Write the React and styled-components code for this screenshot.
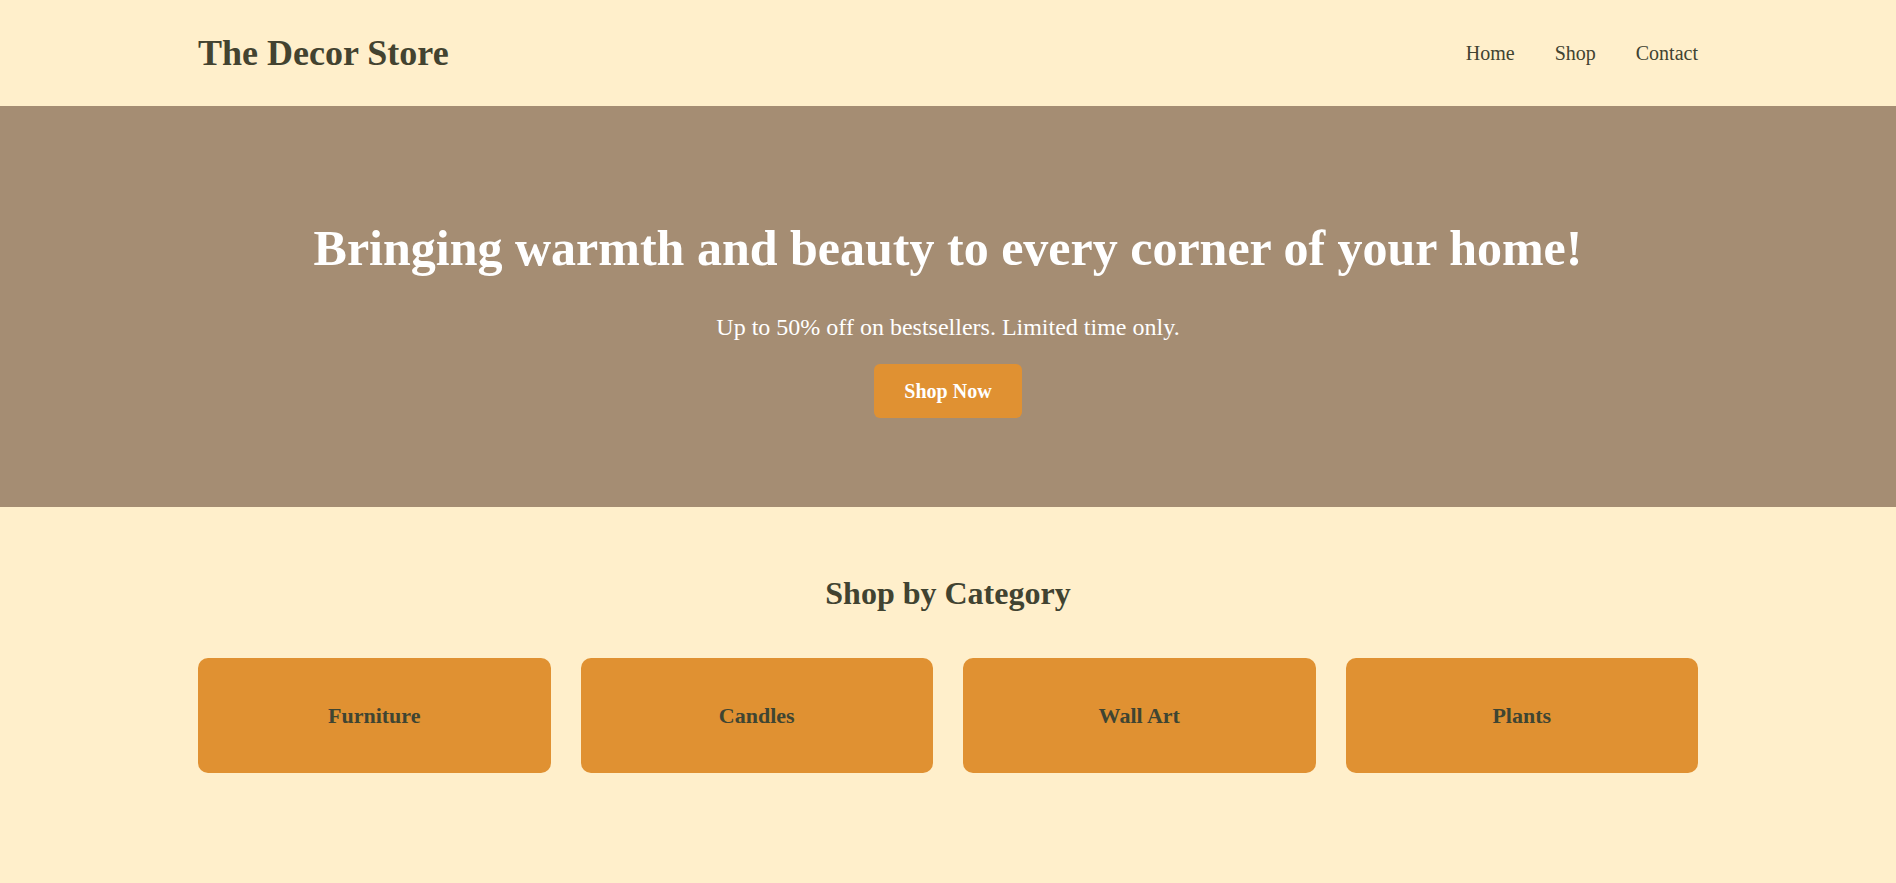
import React from "react";
import styled, { createGlobalStyle } from "styled-components";

const GlobalStyle = createGlobalStyle`
  html, body {
    margin: 0;
    padding: 0;
    background: #ffefcb;
  }
  body {
    font-family: "Liberation Serif", "Times New Roman", serif;
    color: #414331;
  }
  * { box-sizing: border-box; }
`;

const Page = styled.div`
  min-height: 883px;
  background: #ffefcb;
`;

const Container = styled.div`
  max-width: 1500px;
  margin: 0 auto;
`;

const Header = styled.header`
  background: #ffefcb;
  padding: 33px 0;
`;

const HeaderInner = styled(Container)`
  display: flex;
  align-items: center;
  justify-content: space-between;
`;

const Logo = styled.h1`
  margin: 0;
  font-size: 36px;
  line-height: 40px;
  font-weight: 700;
  color: #434330;
`;

const Nav = styled.nav`
  display: flex;
  gap: 40px;
`;

const NavLink = styled.a`
  font-size: 20px;
  color: #414331;
  text-decoration: none;
`;

const Hero = styled.section`
  background: #a58d73;
  padding: 114px 20px 89px;
  display: flex;
  flex-direction: column;
  align-items: center;
  text-align: center;
  color: #ffffff;
`;

const HeroTitle = styled.h2`
  margin: 0 0 38px;
  font-size: 50px;
  font-weight: 700;
  line-height: 56px;
`;

const HeroText = styled.p`
  margin: 0 0 23px;
  font-size: 24px;
  line-height: 27px;
`;

const CtaButton = styled.button`
  font-family: inherit;
  font-size: 20px;
  font-weight: 700;
  line-height: 24px;
  color: #ffffff;
  background: #e09132;
  border: none;
  border-radius: 6px;
  padding: 15px 30px;
  cursor: pointer;
`;

const Categories = styled.section`
  padding: 69px 0 40px;
`;

const SectionTitle = styled.h2`
  margin: 0 0 47px;
  text-align: center;
  font-size: 32px;
  line-height: 35px;
  font-weight: 700;
  color: #414331;
`;

const Grid = styled(Container)`
  display: grid;
  grid-template-columns: repeat(4, 1fr);
  gap: 30px;
`;

const Card = styled.div`
  background: #e09132;
  border-radius: 10px;
  padding: 45px 20px;
  display: flex;
  justify-content: center;
  align-items: center;
`;

const CardTitle = styled.h3`
  margin: 0;
  font-size: 22px;
  line-height: 25px;
  font-weight: 700;
  color: #3f4532;
`;

const categories = ["Furniture", "Candles", "Wall Art", "Plants"];

export default function App() {
  return (
    <Page>
      <GlobalStyle />
      <Header>
        <HeaderInner>
          <Logo>The Decor Store</Logo>
          <Nav>
            <NavLink href="#">Home</NavLink>
            <NavLink href="#">Shop</NavLink>
            <NavLink href="#">Contact</NavLink>
          </Nav>
        </HeaderInner>
      </Header>
      <Hero>
        <HeroTitle>Bringing warmth and beauty to every corner of your home!</HeroTitle>
        <HeroText>Up to 50% off on bestsellers. Limited time only.</HeroText>
        <CtaButton>Shop Now</CtaButton>
      </Hero>
      <Categories>
        <SectionTitle>Shop by Category</SectionTitle>
        <Grid>
          {categories.map((c) => (
            <Card key={c}>
              <CardTitle>{c}</CardTitle>
            </Card>
          ))}
        </Grid>
      </Categories>
    </Page>
  );
}
